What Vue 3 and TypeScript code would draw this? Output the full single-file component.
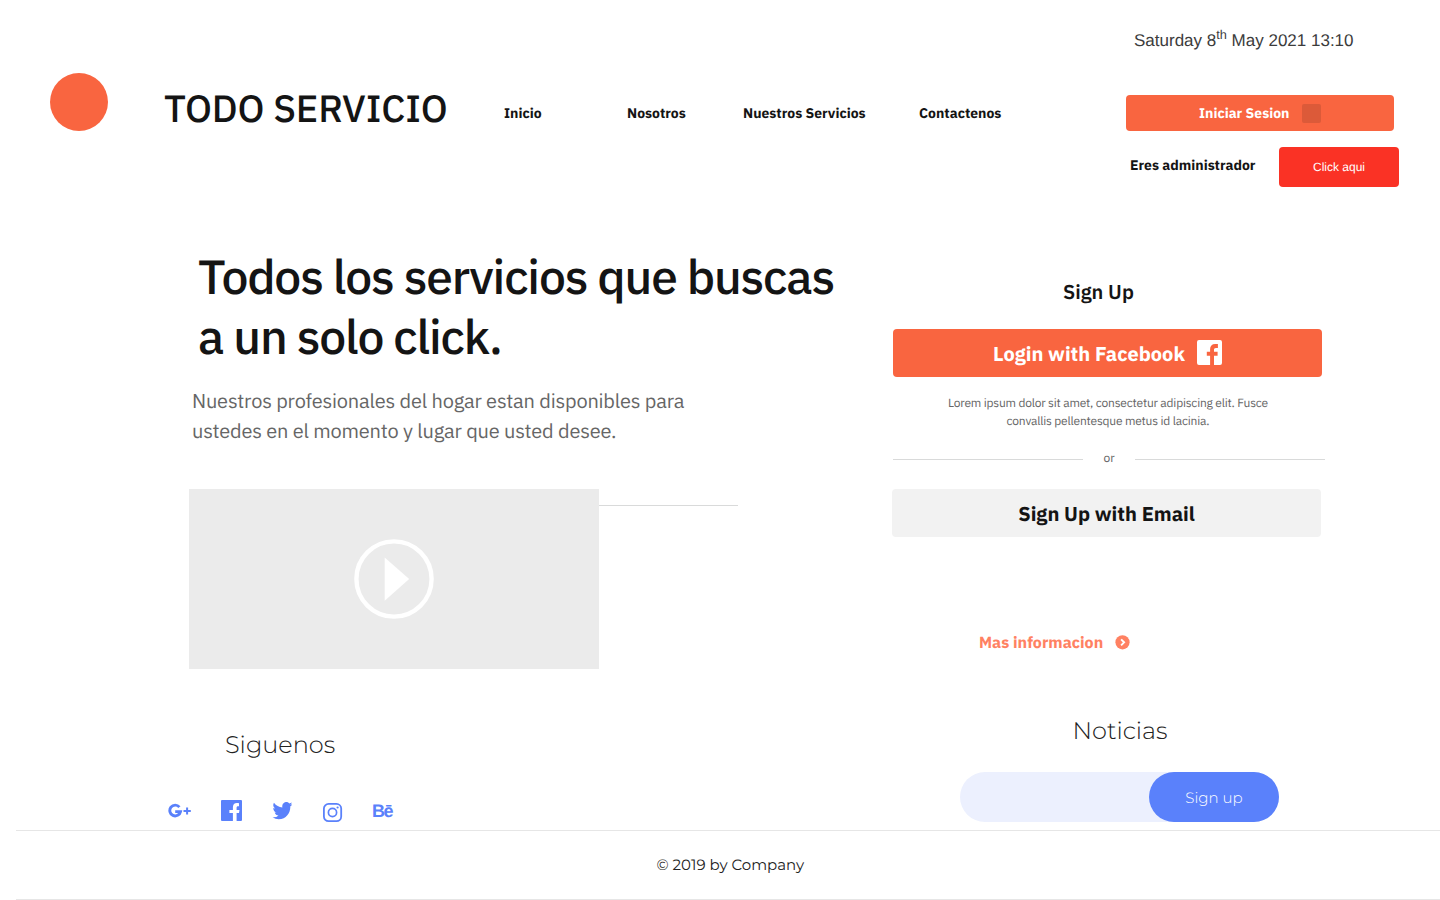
<script setup lang="ts">
interface NavItem {
  label: string
  key: string
}

const navItems: NavItem[] = [
  { label: 'Inicio', key: 'home' },
  { label: 'Nosotros', key: 'about' },
  { label: 'Nuestros Servicios', key: 'services' },
  { label: 'Contactenos', key: 'contact' },
]
</script>

<template>
  <div class="page">
    <header class="header">
      <div class="logo"></div>
      <div class="brand"><span>TODO SERVICIO</span></div>
      <nav class="nav">
        <a v-for="item in navItems" :key="item.key" :class="item.key"><span>{{ item.label }}</span></a>
      </nav>
      <div class="account">
        <div class="date">Saturday 8<sup>th</sup> May 2021 13:10</div>
        <button class="login"><span>Iniciar Sesion</span><i class="swatch"></i></button>
        <div class="admin">
          <strong>Eres administrador</strong>
          <button class="admin-btn">Click aqui</button>
        </div>
      </div>
    </header>

    <main class="main">
      <section class="left">
        <h1>Todos los servicios que buscas<br />a un solo click.</h1>
        <p class="lead">Nuestros profesionales del hogar estan disponibles para<br />ustedes en el momento y lugar que usted desee.</p>
        <div class="media">
          <div class="video">
            <svg width="80" height="80" viewBox="0 0 80 80">
              <circle cx="40" cy="40" r="37.6" fill="none" stroke="#fff" stroke-width="4.4" />
              <path d="M30.7 18.5v43.2L55.2 40z" fill="#fff" />
            </svg>
          </div>
          <div class="rule"></div>
        </div>
        <h2 class="follow"><span>Siguenos</span></h2>
        <div class="social">
          <svg class="gplus" width="24" height="16" viewBox="0 0 24 16" fill="none" stroke="#5a81fb">
            <path d="M11.4 4.1A5.4 5.4 0 1 0 12.5 8.6H7.2" stroke-width="2.9" />
            <path d="M19.1 4.4v7.2M15.5 8h7.3" stroke-width="2" />
          </svg>
          <svg class="fb" width="21" height="21" viewBox="0 0 21 21">
            <path fill="#5a81fb" d="M1 0h19a1 1 0 0 1 1 1v19a1 1 0 0 1-1 1h-4.4v-8h2.4l.5-3.1h-2.9V7.8c0-1 .4-1.500 1.500-1.500H18V3.200c-.5-.1-1.300-.2-2.100-.2-2.500 0-4 1.500-4 4.200v2.700H8.400V13h3.500v8H1a1 1 0 0 1-1-1V1a1 1 0 0 1 1-1z" />
          </svg>
          <svg class="tw" width="20" height="18" viewBox="1.2 3.5 21.4 18" preserveAspectRatio="none">
            <path fill="#5a81fb" d="M23 5.6a8.6 8.6 0 0 1-2.5.7 4.3 4.3 0 0 0 1.9-2.4 8.7 8.7 0 0 1-2.7 1 4.35 4.35 0 0 0-7.4 4A12.3 12.3 0 0 1 3.3 4.3a4.35 4.35 0 0 0 1.3 5.8 4.3 4.3 0 0 1-2-.5v.1a4.35 4.35 0 0 0 3.5 4.2 4.3 4.3 0 0 1-2 .1 4.35 4.35 0 0 0 4.1 3 8.7 8.7 0 0 1-6.4 1.8A12.3 12.3 0 0 0 8.4 20.8c8 0 12.4-6.6 12.4-12.4v-.6A8.8 8.8 0 0 0 23 5.6z" />
          </svg>
          <svg class="ig" width="20" height="20" viewBox="0 0 20 20" fill="none" stroke="#5a81fb">
            <rect x="0.9" y="0.9" width="17.3" height="17.3" rx="4.7" stroke-width="1.8" />
            <circle cx="9.5" cy="9.5" r="4.1" stroke-width="1.7" />
            <circle cx="14.6" cy="4.5" r="1.1" fill="#5a81fb" stroke="none" />
          </svg>
          <span class="be">Bē</span>
        </div>
      </section>

      <section class="right">
        <h3>Sign Up</h3>
        <button class="facebook">
          <span>Login with Facebook</span>
          <svg width="25" height="25" viewBox="0 0 25 25">
            <path fill="#fff" d="M2 0h21a2 2 0 0 1 2 2v21a2 2 0 0 1-2 2h-6v-9.300h3.600v-3.900h-3.600V9.800c0-1.200.6-1.900 1.900-1.900h2V4.100h-2.600c-3.500 0-5.200 2-5.200 5.200v2.500H9.800v3.900h3.300V25H2a2 2 0 0 1-2-2V2a2 2 0 0 1 2-2z" />
          </svg>
        </button>
        <p class="terms">Lorem ipsum dolor sit amet, consectetur adipiscing elit. Fusce<br />convallis pellentesque metus id lacinia.</p>
        <div class="or"><i></i><span>or</span><i></i></div>
        <button class="email"><span>Sign Up with Email</span></button>
        <a class="more">
          <span>Mas informacion</span>
          <svg width="15" height="15" viewBox="0 0 15 15">
            <circle cx="7.5" cy="7.3" r="7.1" fill="#ff8162" />
            <path d="M6.100 4.300 9.100 7.300l-3 3" fill="none" stroke="#fff" stroke-width="1.900" />
          </svg>
        </a>
        <h2 class="news"><span>Noticias</span></h2>
        <div class="subscribe"><button><span>Sign up</span></button></div>
      </section>
    </main>

    <footer class="footer"><span>© 2019 by Company</span></footer>
  </div>
</template>

<style>
body {
  margin: 0;
  background: #fff;
}
</style>

<style scoped>
.page {
  width: 1440px;
  height: 900px;
  overflow: hidden;
  background: #fff;
  color: #141414;
  font-family: "IBM Plex Sans", "Open Sans", "Noto Sans", sans-serif;
  text-rendering: geometricPrecision;
}
.page * {
  box-sizing: border-box;
}
h1, h2, h3, p {
  margin: 0;
}
button {
  border: 0;
  padding: 0;
  font: inherit;
  text-rendering: inherit;
}
svg {
  display: block;
  flex: none;
}
span {
  white-space: nowrap;
}
.header {
  display: flex;
  height: 247px;
}
.logo {
  width: 58px;
  height: 58px;
  margin: 73px 56px 0 50px;
  border-radius: 50%;
  background: #f96540;
}
.brand {
  width: 340px;
  margin-top: 84px;
  font-size: 38px;
  line-height: 50px;
  font-weight: 500;
  letter-spacing: -0.15px;
}
.nav {
  display: grid;
  grid-template-columns: 123px 116px 176px 207px;
  height: 20px;
  margin-top: 103px;
  font-size: 14px;
  line-height: 20px;
  font-weight: 700;
}
.account {
  width: 273px;
}
.date {
  height: 95px;
  padding: 31px 0 0 8px;
  font: 17px/20px "Liberation Sans", Arial, sans-serif;
  color: #3c3c3c;
}
.date sup {
  font-size: 12.75px;
  line-height: 0;
  vertical-align: 7px;
}
.login {
  display: flex;
  align-items: center;
  width: 268px;
  height: 36px;
  padding-left: 73px;
  border-radius: 4px;
  background: #f96540;
  color: #fff;
  font-size: 14px;
  font-weight: 700;
}
.login span {
  width: 103px;
  text-align: left;
}
.swatch {
  width: 19px;
  height: 19px;
  border-radius: 2px;
  background: #dc5a39;
}
.admin {
  display: flex;
  justify-content: space-between;
  margin-top: 16px;
  padding-left: 4px;
}
.admin strong {
  font-size: 14px;
  line-height: 36px;
  white-space: nowrap;
}
.admin-btn {
  width: 120px;
  height: 40px;
  border-radius: 4px;
  background: #fa3225;
  color: #fff;
  font: 12px/40px "Liberation Sans", Arial, sans-serif;
}
.main {
  display: flex;
  height: 583px;
}
.left {
  width: 892px;
}
h1 {
  margin-left: 198px;
  font-size: 48px;
  line-height: 60px;
  font-weight: 500;
  letter-spacing: -1.2px;
  white-space: nowrap;
}
.lead {
  margin: 19px 0 0 192px;
  font-size: 20px;
  line-height: 30px;
  letter-spacing: -0.2px;
  color: #666;
}
.media {
  display: flex;
  margin: 43px 0 0 189px;
}
.video {
  display: grid;
  place-items: center;
  width: 410px;
  height: 180px;
  background: #ebebeb;
}
.rule {
  width: 139px;
  height: 1px;
  margin-top: 16px;
  background: #d9dada;
}
.follow, .news {
  font: 300 24px/30px Montserrat, Inter, sans-serif;
  color: #222;
}
.follow {
  margin: 62px 0 0 225px;
}
.social {
  display: flex;
  margin: 39px 0 0 168px;
}
.gplus {
  margin-top: 3px;
}
.fb {
  margin-left: 29px;
}
.tw {
  margin: 2px 0 0 30px;
}
.ig {
  margin: 3px 0 0 31px;
}
.be {
  margin-left: 29px;
  font: 700 18px/22px "Liberation Sans", Arial, sans-serif;
  letter-spacing: -1.4px;
  color: #5a81fb;
}
.right {
  width: 433px;
}
h3 {
  margin: 30px 0 0 171px;
  font-size: 20px;
  line-height: 30px;
  font-weight: 600;
}
.facebook {
  display: flex;
  align-items: center;
  width: 429px;
  height: 48px;
  margin: 22px 0 0 1px;
  padding-left: 100px;
  border-radius: 4px;
  background: #f96540;
  color: #fff;
  font-size: 20px;
  font-weight: 700;
}
.facebook span {
  width: 204px;
  text-align: left;
}
.facebook svg {
  margin-bottom: 1px;
}
.terms {
  width: 432px;
  margin-top: 18px;
  font-size: 12px;
  line-height: 18px;
  letter-spacing: -0.2px;
  color: #666;
  text-align: center;
}
.or {
  display: grid;
  grid-template-columns: 190px 52px 190px;
  height: 18px;
  margin: 19px 0 0 1px;
  font-size: 12px;
  line-height: 18px;
  color: #666;
  text-align: center;
}
.or i {
  height: 1px;
  margin-top: 9px;
  background: #d9dada;
}
.email {
  display: block;
  width: 429px;
  height: 48px;
  margin-top: 21px;
  border-radius: 4px;
  background: #f2f2f2;
  color: #141414;
  font-size: 20px;
  line-height: 50px;
  font-weight: 700;
}
.more {
  display: flex;
  align-items: center;
  height: 20px;
  margin: 95px 0 0 87px;
  color: #ff8162;
  font-size: 16px;
  line-height: 20px;
  font-weight: 700;
}
.more span {
  width: 136px;
  padding-top: 1px;
}
.news {
  margin: 65px 0 0 180.5px;
}
.subscribe {
  display: flex;
  justify-content: flex-end;
  width: 319px;
  height: 50px;
  margin: 25px 0 0 68px;
  border-radius: 25px;
  background: #ecf0fe;
}
.subscribe button {
  width: 130px;
  height: 50px;
  border-radius: 25px;
  background: #5a81fb;
  color: #fff;
  font: 300 15px/52px Montserrat, Inter, sans-serif;
}
.footer {
  height: 70px;
  margin-left: 16px;
  border-top: 1px solid #e6e6e6;
  border-bottom: 1px solid #e6e6e6;
  padding-left: 640.5px;
  font: 400 15px/68px Montserrat, Inter, sans-serif;
  color: #222;
}
</style>
